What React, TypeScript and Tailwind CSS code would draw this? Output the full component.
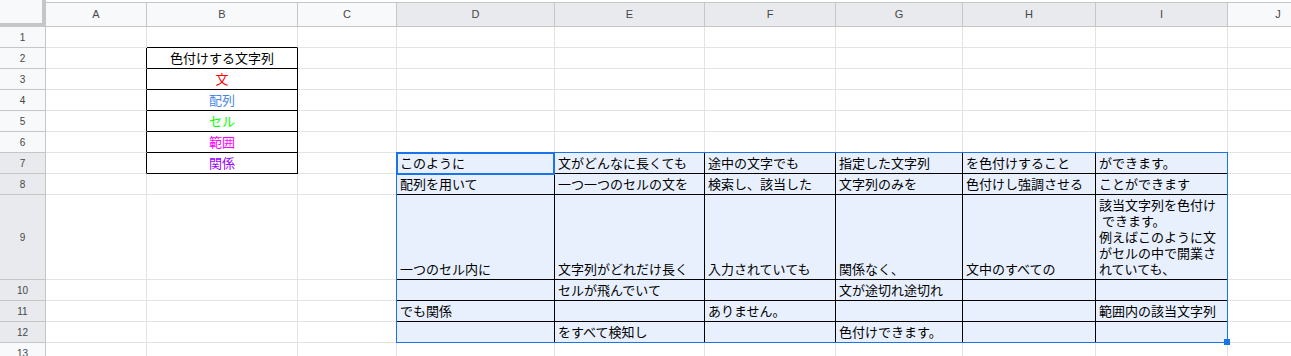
import React from "react";

type Cell = {
  t?: string;
  color?: string;
  center?: boolean;
  wrap?: boolean;
};

const colLetters = ["A", "B", "C", "D", "E", "F", "G", "H", "I", "J"];
const rowHeights = [21, 21, 21, 21, 21, 21, 21, 21, 85, 21, 21, 21, 21];

const data: Record<string, Cell> = {
  B2: { t: "色付けする文字列", center: true },
  B3: { t: "文", color: "text-[#ff0000]", center: true },
  B4: { t: "配列", color: "text-[#4a86e8]", center: true },
  B5: { t: "セル", color: "text-[#00ff00]", center: true },
  B6: { t: "範囲", color: "text-[#ff00ff]", center: true },
  B7: { t: "関係", color: "text-[#9900ff]", center: true },
  D7: { t: "このように" },
  E7: { t: "文がどんなに長くても" },
  F7: { t: "途中の文字でも" },
  G7: { t: "指定した文字列" },
  H7: { t: "を色付けすること" },
  I7: { t: "ができます。" },
  D8: { t: "配列を用いて" },
  E8: { t: "一つ一つのセルの文を" },
  F8: { t: "検索し、該当した" },
  G8: { t: "文字列のみを" },
  H8: { t: "色付けし強調させる" },
  I8: { t: "ことができます" },
  D9: { t: "一つのセル内に" },
  E9: { t: "文字列がどれだけ長く" },
  F9: { t: "入力されていても" },
  G9: { t: "関係なく、" },
  H9: { t: "文中のすべての" },
  I9: {
    t: "該当文字列を色付け\n できます。\n例えばこのように文\nがセルの中で開業さ\nれていても、",
    wrap: true,
  },
  E10: { t: "セルが飛んでいて" },
  G10: { t: "文が途切れ途切れ" },
  D11: { t: "でも関係" },
  F11: { t: "ありません。" },
  I11: { t: "範囲内の該当文字列" },
  E12: { t: "をすべて検知し" },
  G12: { t: "色付けできます。" },
};

function isBlackRight(c: number, r: number) {
  // c: 0=A ... 9=J ; r: 1..13
  if (r >= 2 && r <= 7 && (c === 0 || c === 1)) return true;
  if (r >= 7 && r <= 12 && c >= 2 && c <= 8) return true;
  return false;
}

function isBlackBottom(c: number, r: number) {
  if (c === 1 && r >= 1 && r <= 7) return true;
  if (c >= 3 && c <= 8 && r >= 6 && r <= 12) return true;
  return false;
}

function isSel(c: number, r: number) {
  return c >= 3 && c <= 8 && r >= 7 && r <= 12;
}

export default function App() {
  const cells: React.ReactNode[] = [];

  // header row
  cells.push(
    <div
      key="corner"
      className="bg-[#f8f9fa] border-r-[4px] border-b-[4px] border-[#c4c7c5] -mt-[2px]"
    />
  );
  colLetters.forEach((l, i) => {
    const sel = i >= 3 && i <= 8;
    cells.push(
      <div
        key={"h" + l}
        className={
          "flex items-center justify-center border-t border-r border-b border-[#c4c7c5] text-[11px] text-[#444746] " +
          (sel ? "bg-[#e8eaed]" : "bg-[#f8f9fa]")
        }
        style={{ fontFamily: '"Liberation Sans", Arial, sans-serif' }}
      >
        {l}
      </div>
    );
  });

  for (let r = 1; r <= 13; r++) {
    const selRow = r >= 7 && r <= 12;
    cells.push(
      <div
        key={"r" + r}
        className={
          "flex items-center justify-center border-r border-b border-[#c4c7c5] text-[10px] text-[#444746] " +
          (selRow ? "bg-[#e8eaed]" : "bg-[#f8f9fa]")
        }
        style={{ fontFamily: '"Liberation Sans", Arial, sans-serif' }}
      >
        {r}
      </div>
    );
    colLetters.forEach((l, c) => {
      const key = l + r;
      const d = data[key];
      const br = isBlackRight(c, r);
      const bb = isBlackBottom(c, r);
      const sel = isSel(c, r);
      cells.push(
        <div
          key={key}
          className={
            "flex overflow-hidden border-r border-b px-[3px] pb-[2px] text-[13px] leading-[16px] " +
            (br ? "border-r-black " : "border-r-[#e2e3e3] ") +
            (bb ? "border-b-black " : "border-b-[#e2e3e3] ") +
            (sel ? "bg-[#e8f0fe] " : "bg-white ") +
            (d?.center ? "justify-center items-end " : "items-end ") +
            (d?.color ? d.color : "text-black")
          }
        >
          {d?.t ? (
            <span className={d.wrap ? "whitespace-pre-wrap" : "whitespace-nowrap"}>{d.t}</span>
          ) : null}
        </div>
      );
    });
  }

  return (
    <div
      className="w-[1291px] h-[356px] overflow-hidden bg-white relative"
      style={{ fontFamily: '"Noto Sans CJK JP", "Liberation Sans", sans-serif' }}
    >
      <div className="pt-[2px]">
        <div
          className="relative grid w-[1400px] grid-cols-[46px_101px_151px_99px_158px_150px_131px_127px_133px_132px_101px]"
          style={{ gridTemplateRows: ["25px", ...rowHeights.map((h) => h + "px")].join(" ") }}
        >
          {cells}
          {/* selection range outline */}
          <div className="pointer-events-none absolute left-[396px] top-[150px] w-[832px] h-[191px] border border-[#1a73e8]" />
          {/* active cell */}
          <div className="pointer-events-none absolute left-[396px] top-[150px] w-[159px] h-[23px] border-2 border-[#1a73e8]" />
          {/* fill handle */}
          <div className="pointer-events-none absolute left-[1224px] top-[337px] w-[6px] h-[6px] bg-[#1a73e8]" />
        </div>
      </div>
    </div>
  );
}
